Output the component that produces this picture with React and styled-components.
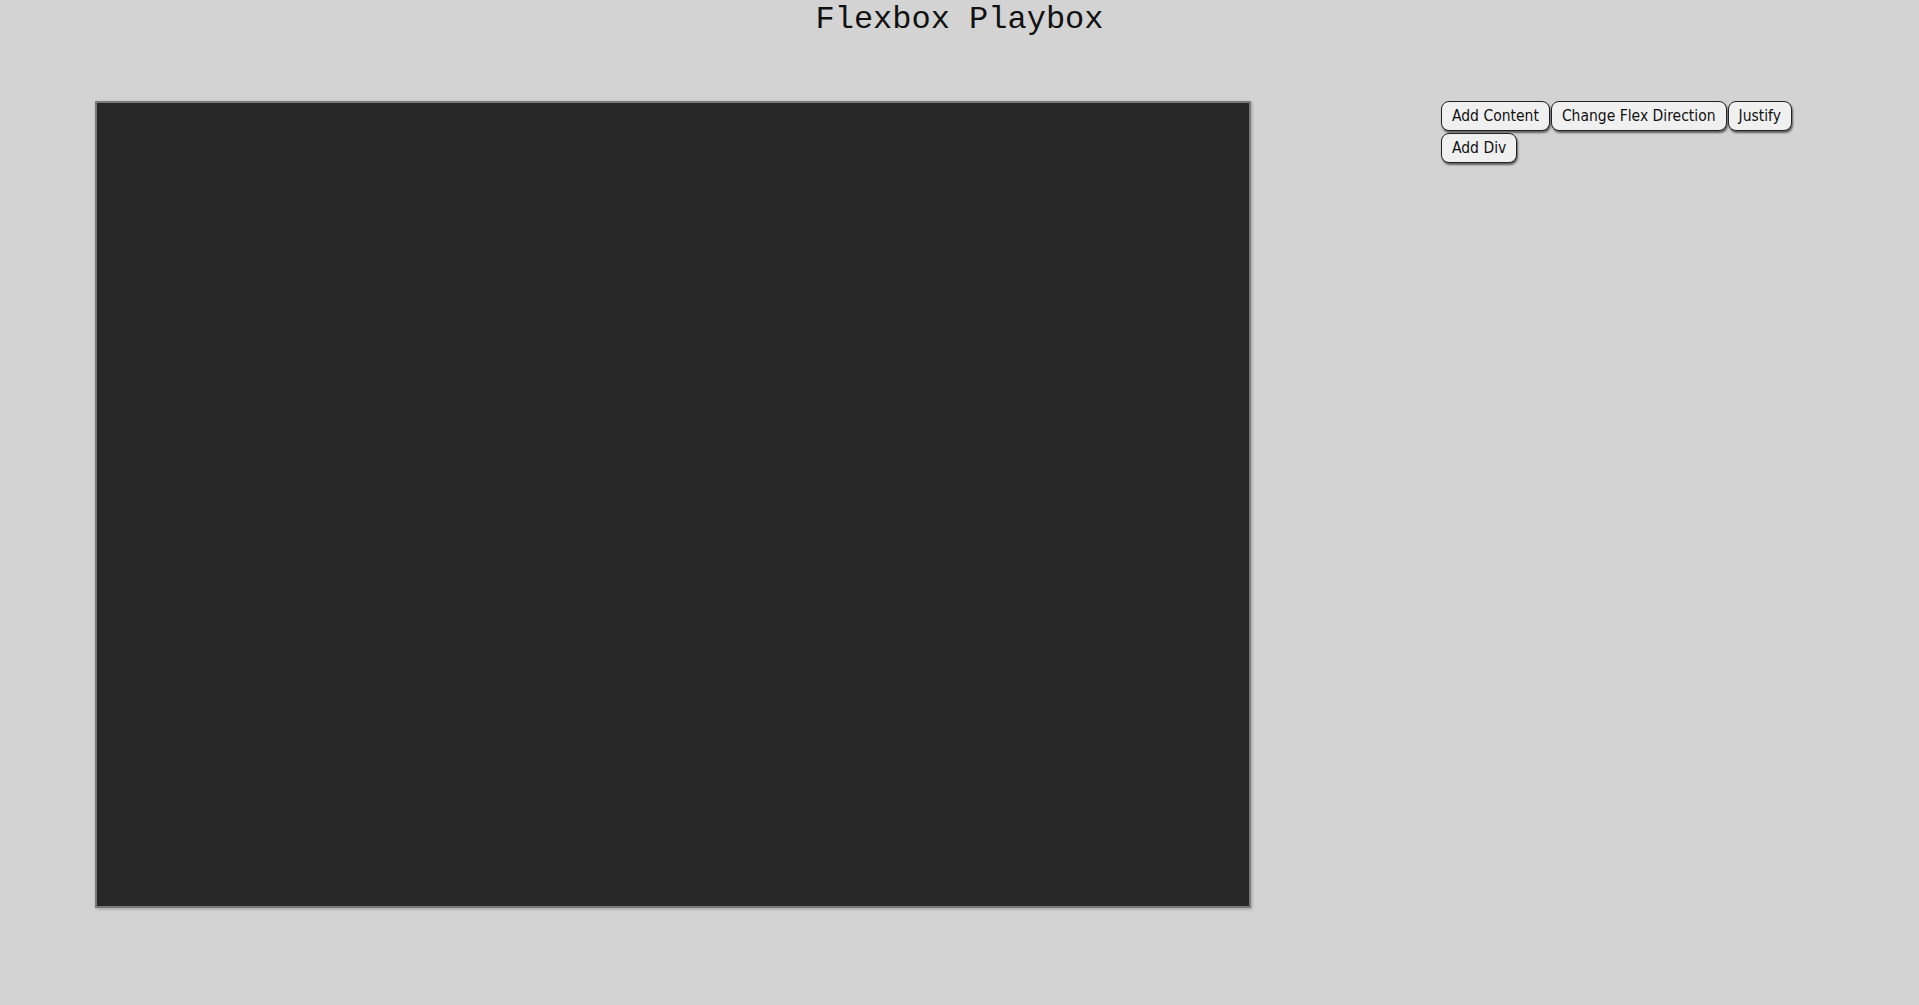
import React from "react";
import styled, { createGlobalStyle } from "styled-components";

const Global = createGlobalStyle`
  html, body { margin: 0; padding: 0; background: #d3d3d3; }
  body { font-family: "DejaVu Sans", Tahoma, sans-serif; min-height: 100vh; }
`;

const Page = styled.div`
  display: flex;
  flex-direction: column;
  width: 100%;
`;

const Title = styled.h1`
  margin: 0;
  padding-top: 2px;
  font-family: "Liberation Mono", "Courier New", monospace;
  font-weight: normal;
  font-size: 32px;
  line-height: 36px;
  text-align: center;
  color: #111;
`;

const Main = styled.div`
  display: flex;
  align-items: flex-start;
  margin-top: 63px;
  padding-left: 95px;
`;

const Stage = styled.div`
  width: 1152px;
  height: 803px;
  background: #282828;
  border: 2px solid #7a7a7a;
  box-shadow: 1px 1px 3px rgba(0, 0, 0, 0.25);
  flex-shrink: 0;
`;

const Controls = styled.div`
  display: flex;
  flex-wrap: wrap;
  gap: 2px 1px;
  width: 384px;
  margin-left: 190px;
`;

const Button = styled.button`
  font-family: "DejaVu Sans Condensed", "DejaVu Sans", Tahoma, sans-serif;
  font-stretch: condensed;
  font-size: 15.5px;
  line-height: 18px;
  color: #111;
  background: #f0f0f0;
  border: 1px solid #222;
  border-radius: 8px;
  padding: 5px 10px;
  box-shadow: 1px 2px 2px rgba(0, 0, 0, 0.55);
  cursor: pointer;
`;

export default function App() {
  return (
    <>
      <Global />
      <Page>
        <Title>Flexbox Playbox</Title>
        <Main>
          <Stage />
          <Controls>
            <Button>Add Content</Button>
            <Button>Change Flex Direction</Button>
            <Button>Justify</Button>
            <Button>Add Div</Button>
          </Controls>
        </Main>
      </Page>
    </>
  );
}
